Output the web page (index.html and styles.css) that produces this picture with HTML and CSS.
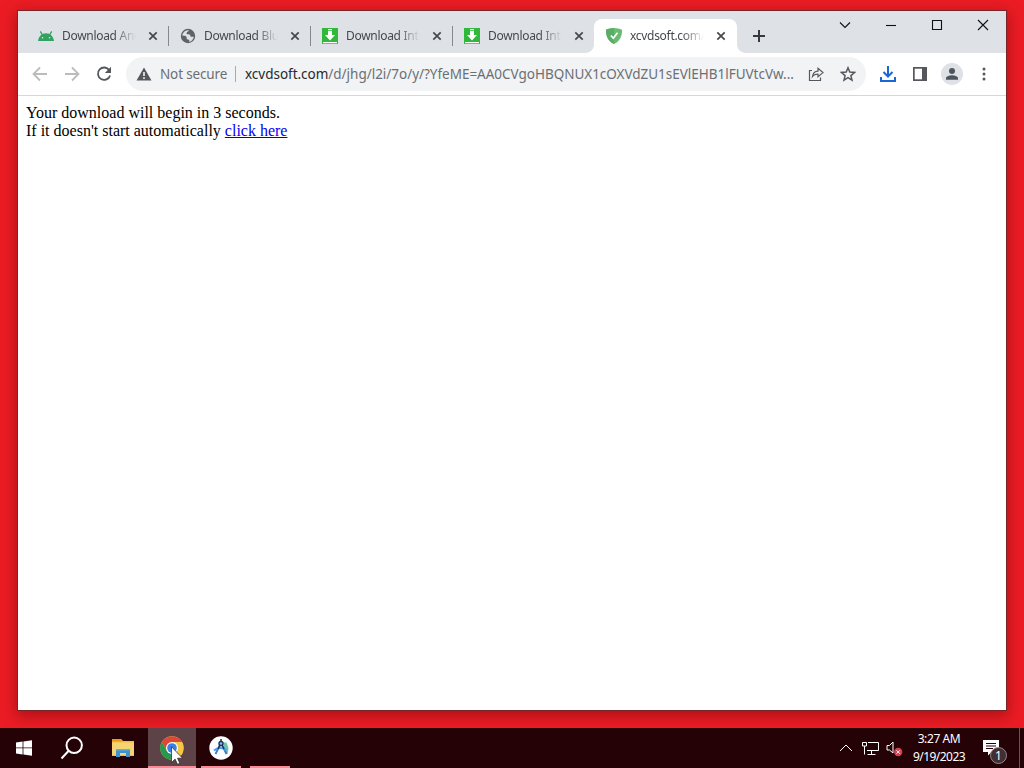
FILE: index.html
```html
<!DOCTYPE html>
<html lang="en">
<head>
  <meta charset="UTF-8" />
  <meta name="viewport" content="width=device-width, initial-scale=1.0"/>
  <title>xcvdsoft.com</title>
  <link rel="stylesheet" href="styles.css">
</head>
<body>
  <div class="desktop">
    <div class="window">
      <div class="tabstrip">
        <div class="tab">
          <svg class="favicon" viewBox="0 0 16 16"><path d="M0 13C.4 9.500 2.500 6.500 5 5.700L8 5.200l3 .5c2.500.8 4.600 3.800 5 7.300z" fill="#34a160"/><path d="M2.300 3.300L4.800 7.500M13.700 3.300L11.200 7.500" stroke="#34a160" stroke-width="1.300"/><circle cx="4.500" cy="9.800" r=".8" fill="#d9eee0"/><circle cx="11.500" cy="9.800" r=".8" fill="#d9eee0"/></svg>
          <span class="title">Download And</span>
          <svg class="close" viewBox="0 0 10 10"><path d="M1.300 1.300l7.400 7.400M8.700 1.300L1.300 8.700"/></svg>
        </div>
        <div class="tab">
          <svg class="favicon" viewBox="0 0 16 16"><circle cx="8" cy="8" r="7.200" fill="#5f6368"/><path d="M9 2.300c-.3 1.500-2 1.200-2.400 2.600-.3 1 .6 1.500 1.600 1.400 1.500-.2 2.100.7 2.200 1.700.2 1 1.700.8 3.400.7-.4 2.500-2 4.600-4.500 5.200.3-1.600-.2-2.200-1.300-2.300-1.200-.1-1.500-.8-1.300-2C6.900 8.300 5 7.700 2.300 7.600 2.600 4.500 5.500 1.800 9 2.300z" fill="#dee1e6"/></svg>
          <span class="title">Download Blu</span>
          <svg class="close" viewBox="0 0 10 10"><path d="M1.300 1.300l7.400 7.400M8.700 1.300L1.300 8.700"/></svg>
        </div>
        <div class="tab">
          <svg class="favicon" viewBox="0 0 16 16"><path d="M0 0h16v16H0z" fill="#2fb83a"/><path d="M6 1h4v1.200H6zM6 3h4v4h3l-5 5.500L3 7h3zM1 14h14v1.200H1z" fill="#fff"/></svg>
          <span class="title">Download Inte</span>
          <svg class="close" viewBox="0 0 10 10"><path d="M1.300 1.300l7.400 7.400M8.700 1.300L1.300 8.700"/></svg>
        </div>
        <div class="tab last">
          <svg class="favicon" viewBox="0 0 16 16"><path d="M0 0h16v16H0z" fill="#2fb83a"/><path d="M6 1h4v1.200H6zM6 3h4v4h3l-5 5.500L3 7h3zM1 14h14v1.200H1z" fill="#fff"/></svg>
          <span class="title">Download Inte</span>
          <svg class="close" viewBox="0 0 10 10"><path d="M1.300 1.300l7.400 7.400M8.700 1.300L1.300 8.700"/></svg>
        </div>
        <div class="tab active">
          <svg class="favicon" viewBox="0 0 16 16"><path d="M8 0c2.500.2 5.500.7 8 1.700C16.200 8 14 13 8 16 2 13-.2 8 0 1.700 2.500.7 5.500.2 8 0z" fill="#68bc71"/><path d="M8 0v16C2 13-.2 8 0 1.700 2.500.7 5.500.2 8 0z" fill="#5aad65"/><path d="M4.800 7.500l2.500 2.700 4.200-5.400" fill="none" stroke="#fff" stroke-width="1.700"/></svg>
          <span class="title">xcvdsoft.com/</span>
          <svg class="close" viewBox="0 0 10 10"><path d="M1.300 1.300l7.400 7.400M8.700 1.300L1.300 8.700"/></svg>
        </div>
        <svg class="new-tab" viewBox="0 0 12 12"><path d="M6 0v12M0 6h12"/></svg>
        <div class="controls">
          <svg viewBox="0 0 12 12"><path d="M1 3.500l5 5 5-5"/></svg>
          <svg viewBox="0 0 12 12"><path d="M1 6.500h10"/></svg>
          <svg viewBox="0 0 12 12"><path d="M1.500 1.500h9v9h-9z"/></svg>
          <svg viewBox="0 0 12 12"><path d="M1 1l10 10M11 1L1 11"/></svg>
        </div>
      </div>

      <div class="toolbar">
        <div class="nav">
          <svg class="off" viewBox="0 0 16 16"><path d="M15 8H2M8 1.500L1.500 8 8 14.500"/></svg>
          <svg class="off" viewBox="0 0 16 16"><path d="M1 8h13M8 1.500L14.500 8 8 14.500"/></svg>
          <svg viewBox="0 0 16 16"><path d="M13.300 4.200A6.200 6.200 0 1 0 14.100 9.500"/><path d="M15 .8V7H8.800z" class="solid"/></svg>
        </div>
        <div class="omnibox">
          <svg class="warning" viewBox="0 0 16 14"><path d="M8 .5L15.500 13.500H.5z" fill="#54585d"/><path d="M8 5v4M8 10.300v1.700" stroke="#f1f3f4" stroke-width="1.600"/></svg>
          <span class="insecure">Not secure</span>
          <span class="divider"></span>
          <span class="url"><b>xcvdsoft.com</b>/d/jhg/l2i/7o/y/?YfeME=AA0CVgoHBQNUX1cOXVdZU1sEVlEHB1lFUVtcVw...</span>
          <svg class="share" viewBox="0 0 16 16"><path d="M4 4.500H1.500v10h11V11.500M4.500 10.500C5 7 7 5.200 10 5.100V2.300L15 6.600l-5 4.200V8.200C7.500 8 5.800 8.800 4.500 10.500z"/></svg>
          <svg class="star" viewBox="0 0 16 16"><path d="M8 1.800l1.800 4.300 4.700.4-3.600 3.100 1.100 4.600L8 11.700l-4 2.500 1.100-4.600-3.600-3.100 4.700-.4z"/></svg>
        </div>
        <div class="actions">
          <svg viewBox="0 0 16 16"><path d="M8 0v10M3.500 6L8 10.500 12.500 6M1 11v4h14v-4" fill="none" stroke="#1a66d2" stroke-width="2"/></svg>
          <svg viewBox="0 0 16 16"><path d="M1 1h14v14H1z" fill="#54585d"/><path d="M2.700 2.700h7.300v10.600H2.700z" fill="#fff"/></svg>
          <span class="avatar"><svg viewBox="0 0 16 16"><circle cx="8" cy="5" r="3" fill="#4f555c"/><path d="M2 13.800v-1.500C2 10.200 5.500 9.300 8 9.300s6 .9 6 3v1.500z" fill="#4f555c"/></svg></span>
          <svg viewBox="0 0 16 16" fill="#54585d"><circle cx="8" cy="3" r="1.500"/><circle cx="8" cy="8" r="1.500"/><circle cx="8" cy="13" r="1.500"/></svg>
        </div>
      </div>

      <div class="page">
        Your download will begin in 3 seconds.<br>
        If it doesn't start automatically <a href="#">click here</a>
      </div>
    </div>
  </div>

  <div class="taskbar">
    <div class="task"><svg width="16" height="16" viewBox="0 0 16 16"><path d="M0 2.400l6.600-.9v6H0zM7.400 1.400L16 .2v7.300H7.400zM0 8.300h6.600v6.100L0 13.500zM7.400 8.300H16v7.500l-8.600-1.200z" fill="#fff"/></svg></div>
    <div class="task"><svg width="24" height="24" viewBox="0 0 24 24" fill="none" stroke="#fff" stroke-width="2"><circle cx="14.200" cy="9.300" r="7.700"/><path d="M8.700 14.800L1.500 22.500"/></svg></div>
    <div class="task explorer"><svg width="22" height="18" viewBox="0 0 22 18"><path d="M0 0h9l2 2h11v15H0z" fill="#f3bd45"/><path d="M0 0h9l1.500 2.500H0z" fill="#e59a20"/><path d="M0 3.500h22V16H0z" fill="#f5d272"/><path d="M4 10h14v8h-4v-4H8v4H4z" fill="#3f93cb"/><path d="M4 10h14v1.500H4z" fill="#62afdb"/></svg></div>
    <div class="task current">
      <svg width="24" height="24" viewBox="0 0 24 24"><circle cx="12" cy="12" r="11.800" fill="#f6c744"/><path d="M1.800 6A11.800 11.800 0 0 1 22.200 6H12L6.800 15z" fill="#dd4738"/><path d="M1.800 6A11.800 11.800 0 0 0 12 23.800l5.200-8.800-10.400 0z" fill="#269950"/><circle cx="12" cy="12" r="6" fill="#fff"/><circle cx="12" cy="12" r="4.800" fill="#397fe6"/></svg>
      <svg class="cursor" width="12" height="19" viewBox="0 0 12 19"><path d="M.5.800v15.700l3.600-3.400 2.400 5.200 2.300-1-2.300-5.100h5z" fill="#fff" stroke="#222" stroke-width=".7"/></svg>
    </div>
    <div class="task running"><svg width="24" height="24" viewBox="0 0 24 24"><circle cx="12" cy="12" r="11.700" fill="#fff"/><path d="M14 6.500h3.500l2 5.500-1 6h-2z" fill="#68c5ae"/><path d="M11.500 8L6.500 18M12.500 8l5 10" stroke="#3979cd" stroke-width="1.800"/><path d="M5 14.500c3.500-3.500 9-3.500 12.500 0" fill="none" stroke="#4b9bed" stroke-width="2"/><circle cx="12" cy="7.500" r="2" fill="#8bbbea" stroke="#193657" stroke-width="1.400"/><path d="M12 3v2.500M11 9l-2 4M13 9l2 4" stroke="#193657" stroke-width="1.500"/></svg></div>
    <div class="task running"></div>
    <div class="tray">
      <svg class="chevron" width="14" height="8" viewBox="0 0 14 8"><path d="M1 7l6-6 6 6"/></svg>
      <svg class="network" width="17" height="15" viewBox="0 0 17 15"><path d="M6 1.500h10.500v8H5M.500 1.500h4v3.500h-4zM2.500 5v8.500M9.500 9.500v4M5.500 13.500h8"/></svg>
      <svg class="sound" width="17" height="16" viewBox="0 0 17 16"><path d="M1 4.500h2.500L7 1v11L3.500 9H1z"/><circle cx="12.200" cy="11" r="4.200" fill="#d3404f" stroke="none"/><path d="M10.500 9.300l3.400 3.400M13.900 9.300l-3.400 3.400"/></svg>
      <div class="clock"><span class="time">3:27 AM</span><span class="date">9/19/2023</span></div>
      <div class="notice">
        <svg width="16" height="16" viewBox="0 0 16 16"><path d="M0 0h16v12H8.500L5 15.500V12H0z" fill="#fff"/><path d="M3 3.500h10M3 6h10M3 8.500h7" stroke="#250205"/></svg>
        <span class="count">1</span>
      </div>
      <span class="peek"></span>
    </div>
  </div>
</body>
</html>
```
FILE: styles.css
```css
body {
  margin: 0;
  width: 1024px;
  height: 768px;
  display: flex;
  flex-direction: column;
  overflow: hidden;
  background: #ec1c24;
  font-family: "Noto Sans", "Open Sans", sans-serif;
}
svg {
  display: block;
  flex: none;
}
.desktop {
  box-sizing: border-box;
  height: 728px;
  padding: 11px 18px 18px;
  background: #ec1c24;
}
.window {
  display: flex;
  flex-direction: column;
  height: 699px;
  background: #fff;
  box-shadow: 0 0 0 1px #7b2428, 0 4px 14px 2px rgba(70,0,0,0.4);
}

/* tabs */
.tabstrip {
  display: flex;
  align-items: flex-end;
  box-sizing: border-box;
  height: 42px;
  padding-left: 8px;
  background: #dee1e6;
}
.tab {
  position: relative;
  display: flex;
  align-items: center;
  box-sizing: border-box;
  width: 142px;
  height: 34px;
  padding: 0 10px 0 12px;
}
.tab::after {
  content: "";
  position: absolute;
  right: -1px;
  top: 7px;
  width: 1px;
  height: 20px;
  background: #85888d;
}
.tab.last::after {
  display: none;
}
.tab.active {
  width: 143px;
  background: #fff;
  border-radius: 8px 8px 0 0;
}
.tab.active::before, .tab.active::after {
  content: "";
  position: absolute;
  top: auto;
  bottom: 0;
  width: 8px;
  height: 8px;
}
.tab.active::before {
  left: -8px;
  background: radial-gradient(circle at 0 0, #dee1e6 7.500px, #fff 8px);
}
.tab.active::after {
  right: -8px;
  background: radial-gradient(circle at 100% 0, #dee1e6 7.500px, #fff 8px);
}
.favicon {
  width: 16px;
  height: 16px;
}
.title {
  width: 74px;
  margin-left: 8px;
  white-space: nowrap;
  font-size: 12px;
  letter-spacing: -0.300px;
  line-height: 18px;
  color: #45494d;
  -webkit-mask-image: linear-gradient(to right, #000 70%, transparent);
  mask-image: linear-gradient(to right, #000 70%, transparent);
}
.close {
  width: 10px;
  height: 10px;
  margin-left: 12px;
  stroke: #45494d;
  stroke-width: 1.700;
}
.new-tab {
  width: 12px;
  height: 12px;
  margin: 0 0 11px 16px;
  stroke: #36393d;
  stroke-width: 2;
}
.controls {
  display: flex;
  align-self: flex-start;
  gap: 34px;
  margin: 8px 17px 0 auto;
}
.controls svg {
  width: 12px;
  height: 12px;
  fill: none;
  stroke: #111;
  stroke-width: 1.100;
}

/* toolbar */
.toolbar {
  display: flex;
  align-items: center;
  box-sizing: border-box;
  height: 43px;
  padding-left: 14px;
  border-bottom: 1px solid #d5d7da;
}
.nav {
  display: flex;
  gap: 16px;
}
.nav svg {
  width: 16px;
  height: 16px;
  fill: none;
  stroke: #54585d;
  stroke-width: 1.800;
}
.nav .off {
  stroke: #babcbe;
}
.nav .solid {
  fill: #54585d;
  stroke: none;
}
.omnibox {
  display: flex;
  flex: none;
  align-items: center;
  box-sizing: border-box;
  width: 740px;
  height: 34px;
  margin-left: 14px;
  padding-left: 10px;
  border-radius: 17px;
  background: #f1f3f4;
  font-size: 13.500px;
  letter-spacing: -0.020px;
  color: #6b6f74;
  white-space: nowrap;
}
.warning {
  width: 16px;
  height: 14px;
}
.insecure {
  width: 67px;
  margin-left: 8px;
  letter-spacing: -0.150px;
}
.divider {
  width: 1px;
  height: 16px;
  margin: 0 9px 0 8px;
  background: #a7aaae;
}
.url {
  width: 551px;
}
.url b {
  font-weight: normal;
  color: #26292c;
}
.share, .star {
  width: 16px;
  height: 16px;
  margin-left: 12px;
  fill: none;
  stroke: #54585d;
  stroke-width: 1.200;
}
.star {
  margin-left: 16px;
  stroke-width: 1.500;
}
.actions {
  display: flex;
  flex: none;
  align-items: center;
  margin-left: 14px;
}
.actions > svg {
  width: 16px;
  height: 16px;
  margin-right: 16px;
}
.actions > svg:last-child {
  margin-right: 0;
}
.avatar {
  display: flex;
  align-items: center;
  justify-content: center;
  width: 22px;
  height: 22px;
  margin: 0 13px 0 -3px;
  border-radius: 50%;
  background: #dee1e6;
}
.avatar svg {
  width: 16px;
  height: 16px;
}

.page {
  padding: 8px;
  font: 16px/18px "Liberation Serif", serif;
  color: #000;
}
.page a {
  color: #0000ee;
}

/* taskbar */
.taskbar {
  display: flex;
  height: 40px;
  background: #250205;
}
.task {
  position: relative;
  display: flex;
  align-items: center;
  justify-content: center;
  box-sizing: border-box;
  width: 48px;
  height: 40px;
}
.task.explorer {
  width: 52px;
  padding-left: 2px;
}
.task.current {
  padding-top: 2px;
  background: #5d4347;
  border-bottom: 2px solid #f78b98;
}
.task.running {
  width: 40px;
  margin-left: 5px;
  padding-top: 2px;
  border-bottom: 2px solid #f78b98;
}
.task.running + .running {
  margin-left: 9px;
}
.cursor {
  position: absolute;
  left: 23px;
  top: 18px;
}
.tray {
  display: flex;
  align-items: center;
  margin-left: auto;
  fill: none;
  stroke: #fff;
  color: #fff;
}
.network {
  margin-left: 9px;
}
.sound {
  margin: 2px 0 0 7px;
}
.clock {
  display: flex;
  flex-direction: column;
  align-items: center;
  width: 72px;
  font-size: 12px;
  letter-spacing: -0.400px;
  line-height: 18px;
}
.date {
  letter-spacing: -0.550px;
}
.notice {
  position: relative;
  margin-left: 8px;
}
.notice svg {
  stroke: none;
}
.count {
  position: absolute;
  left: 7px;
  top: 7px;
  box-sizing: border-box;
  width: 17px;
  height: 17px;
  border: 1px solid #9b8588;
  border-radius: 50%;
  background: #413033;
  font-size: 12px;
  line-height: 15px;
  text-align: center;
}
.peek {
  width: 1px;
  height: 40px;
  margin: 0 4px 0 20px;
  background: #6c5255;
}
.chevron {
  margin-left: 2px;
}
```
